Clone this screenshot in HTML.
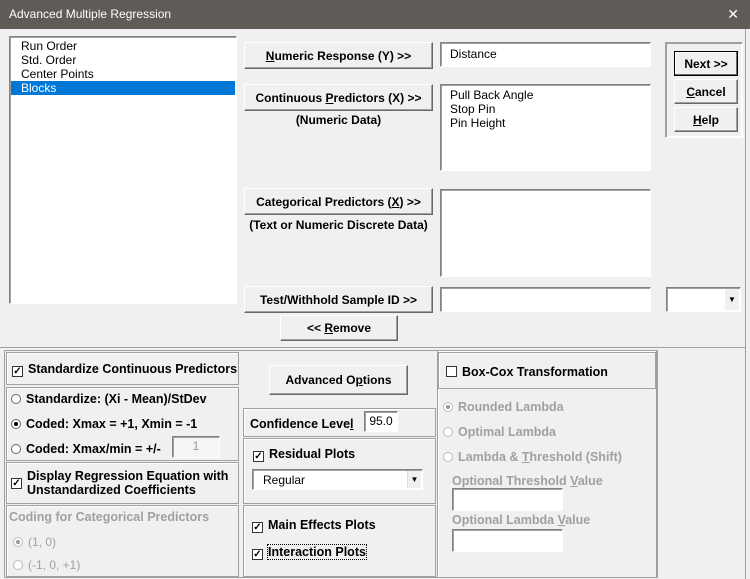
<!DOCTYPE html>
<html><head><meta charset="utf-8"><style>
*{box-sizing:border-box;margin:0;padding:0}
body{width:750px;height:579px;background:#f0f0f0;font-family:"Liberation Sans",Arial,sans-serif;font-size:12px;color:#000;position:relative;overflow:hidden}
.a{position:absolute;white-space:nowrap}
.title{left:0;top:0;width:750px;height:29px;background:#5f5b57;color:#fff;font-size:12px;line-height:29px;padding-left:9px}
.x{right:11px;top:0;color:#fff;font-size:14px;line-height:29px}
.sunk{background:#fff;border:1px solid;border-color:#828282 #fff #fff #828282;box-shadow:inset 1px 1px 0 #a0a0a0}
.btn{background:#f0f0f0;border:1px solid;border-color:#fff #696969 #696969 #fff;box-shadow:inset -1px -1px 0 #a0a0a0;font-weight:bold;font-size:12px;text-align:center;display:flex;align-items:center;justify-content:center}
.grp{border:1px solid;border-color:#a0a0a0 #fff #fff #a0a0a0;box-shadow:1px 1px 0 #a0a0a0 inset, -1px -1px 0 #fff inset}
.box{border:1px solid #a0a0a0;box-shadow:inset 1px 1px 0 #fff}
.b{font-weight:bold;font-size:12px}
.cb{display:inline-block;width:11px;height:11px;border:1px solid #333;background:#fff;font-size:10px;line-height:9px;text-align:center;vertical-align:-1px;margin-right:5px;font-weight:bold}
.rb{display:inline-block;width:10px;height:10px;border-radius:50%;border:1px solid #666;background:#fff;vertical-align:-1px;margin-right:5px;position:relative}
.rb.on:after{content:"";position:absolute;left:2px;top:2px;width:4px;height:4px;border-radius:50%;background:#000}
.dis{color:#a0a0a0}
.dis .rb{border-color:#bbb}
.dis .rb.on:after{background:#999}
</style></head><body>
<div class="a title">Advanced Multiple Regression</div>
<div class="a x">✕</div>
<div class="a" style="left:745px;top:29px;width:1px;height:550px;background:#a0a0a0"></div>

<div class="a sunk" style="left:9px;top:36px;width:228px;height:268px;padding:2px 1px;line-height:14px;font-size:12px">
<div style="padding-left:10px">Run Order</div><div style="padding-left:10px">Std. Order</div><div style="padding-left:10px">Center Points</div>
<div style="padding-left:10px;background:#0078d7;color:#fff">Blocks</div></div>

<div class="a btn" style="left:244px;top:42px;width:189px;height:27px"><span><u>N</u>umeric Response (Y) &gt;&gt;</span></div>
<div class="a btn" style="left:244px;top:84px;width:189px;height:27px"><span>Continuous <u>P</u>redictors (X) &gt;&gt;</span></div>
<div class="a b" style="left:244px;top:113px;width:189px;text-align:center">(Numeric Data)</div>
<div class="a btn" style="left:244px;top:188px;width:189px;height:27px"><span>Categorical Predictors (<u>X</u>) &gt;&gt;</span></div>
<div class="a b" style="left:240px;top:218px;width:197px;text-align:center">(Text or Numeric Discrete Data)</div>
<div class="a btn" style="left:244px;top:286px;width:189px;height:27px"><span>Test/Withhold Sample ID &gt;&gt;</span></div>
<div class="a btn" style="left:280px;top:315px;width:118px;height:26px"><span>&lt;&lt; <u>R</u>emove</span></div>

<div class="a sunk" style="left:440px;top:42px;width:211px;height:25px;padding:4px 9px">Distance</div>
<div class="a sunk" style="left:440px;top:84px;width:211px;height:87px;padding:3px 9px;line-height:14px">Pull Back Angle<br>Stop Pin<br>Pin Height</div>
<div class="a sunk" style="left:440px;top:189px;width:211px;height:88px"></div>
<div class="a sunk" style="left:440px;top:287px;width:211px;height:25px"></div>
<div class="a sunk" style="left:666px;top:287px;width:75px;height:25px"><div class="a" style="right:1px;top:1px;width:14px;height:21px;background:#f0f0f0;font-size:8px;text-align:center;line-height:21px">▼</div></div>

<div class="a grp" style="left:665px;top:42px;width:78px;height:96px"></div>
<div class="a btn" style="left:674px;top:51px;width:64px;height:25px;border:1px solid #000;box-shadow:inset -1px -1px 0 #696969, inset 1px 1px 0 #fff"><span>Next &gt;&gt;</span></div>
<div class="a btn" style="left:674px;top:79px;width:64px;height:25px"><span><u>C</u>ancel</span></div>
<div class="a btn" style="left:674px;top:107px;width:64px;height:25px"><span><u>H</u>elp</span></div>

<div class="a" style="left:0;top:347px;width:745px;height:1px;background:#a0a0a0"></div>
<div class="a" style="left:4px;top:350px;width:654px;height:228px;border:1px solid #a0a0a0"></div>
<div class="a box" style="left:6px;top:352px;width:233px;height:33px"></div>
<div class="a b" style="left:12px;top:362px;font-size:12.5px"><span class="cb">✓</span>Standardize Continuous Predictors</div>
<div class="a box" style="left:6px;top:387px;width:233px;height:74px"></div>
<div class="a b" style="left:11px;top:392px;font-size:12.5px"><span class="rb"></span>Standardize: (Xi - Mean)/StDev</div>
<div class="a b" style="left:11px;top:417px;font-size:12.5px"><span class="rb on"></span>Coded: Xmax = +1, Xmin = -1</div>
<div class="a b" style="left:11px;top:442px;font-size:12.5px"><span class="rb"></span>Coded: Xmax/min = +/-</div>
<div class="a sunk" style="left:172px;top:436px;width:48px;height:22px;background:#f5f5f5;color:#999;text-align:center;line-height:18px">1</div>
<div class="a box" style="left:6px;top:462px;width:233px;height:42px"></div>
<div class="a b" style="left:11px;top:469px;font-size:12.5px;line-height:14px"><span class="cb" style="position:absolute;left:0;top:9px">✓</span><div style="padding-left:16px">Display Regression Equation with<br>Unstandardized Coefficients</div></div>
<div class="a box dis" style="left:6px;top:505px;width:233px;height:72px"></div>
<div class="a dis b" style="left:9px;top:510px;font-size:12.5px">Coding for Categorical Predictors</div>
<div class="a dis" style="left:13px;top:535px;font-size:12px"><span class="rb on"></span>(1, 0)</div>
<div class="a dis" style="left:13px;top:558px;font-size:12px"><span class="rb"></span>(-1, 0, +1)</div>

<div class="a btn" style="left:269px;top:365px;width:139px;height:30px"><span>Advanced O<u>p</u>tions</span></div>
<div class="a box" style="left:243px;top:408px;width:193px;height:29px"></div>
<div class="a b" style="left:250px;top:417px;font-size:12.5px">Confidence Leve<u>l</u></div>
<div class="a sunk" style="left:364px;top:411px;width:34px;height:21px;text-align:center;line-height:19px">95.0</div>
<div class="a box" style="left:243px;top:438px;width:193px;height:66px"></div>
<div class="a b" style="left:253px;top:447px;font-size:12.5px"><span class="cb">✓</span>Residual Plots</div>
<div class="a sunk" style="left:252px;top:469px;width:171px;height:21px;padding:3px 10px">Regular<div class="a" style="right:1px;top:1px;width:14px;height:17px;background:#f0f0f0;font-size:8px;text-align:center;line-height:17px;border-left:1px solid #ddd">▼</div></div>
<div class="a box" style="left:243px;top:505px;width:193px;height:72px"></div>
<div class="a b" style="left:252px;top:518px;font-size:12.5px"><span class="cb">✓</span>Main Effects Plots</div>
<div class="a b" style="left:252px;top:545px;font-size:12.5px"><span class="cb">✓</span><span style="outline:1px dotted #000">Interaction Plots</span></div>

<div class="a box" style="left:437px;top:350px;width:220px;height:228px"></div>
<div class="a box" style="left:438px;top:352px;width:218px;height:37px"></div>
<div class="a b" style="left:446px;top:365px;font-size:12.5px"><span class="cb"></span>Box-Cox Transformation</div>
<div class="a dis b" style="left:443px;top:400px;font-size:12.5px"><span class="rb on"></span>Rounded Lambda</div>
<div class="a dis b" style="left:443px;top:425px;font-size:12.5px"><span class="rb"></span>Optimal Lambda</div>
<div class="a dis b" style="left:443px;top:450px;font-size:12.5px"><span class="rb"></span>Lambda &amp; <u>T</u>hreshold (Shift)</div>
<div class="a dis b" style="left:452px;top:474px;font-size:12.5px">Optional Threshold <u>V</u>alue</div>
<div class="a sunk" style="left:452px;top:488px;width:111px;height:23px"></div>
<div class="a dis b" style="left:452px;top:513px;font-size:12.5px">Optional Lambda <u>V</u>alue</div>
<div class="a sunk" style="left:452px;top:529px;width:111px;height:23px"></div>
</body></html>
